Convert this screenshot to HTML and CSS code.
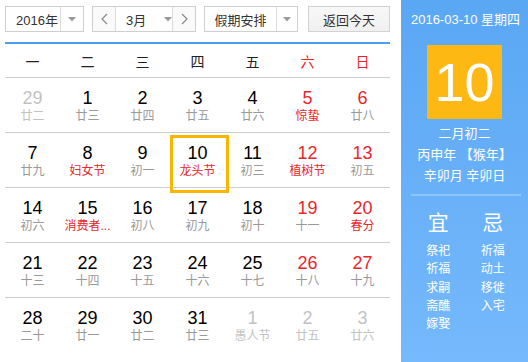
FILE: index.html
```html
<!DOCTYPE html>
<html lang="zh-CN">
<head>
<meta charset="utf-8">
<title>万年历</title>
<link rel="stylesheet" href="styles.css">
</head>
<body>
<div class="app">
  <div class="main">
    <div class="toolbar">
      <div class="sel year">
        <span class="val">2016年</span>
        <span class="drop"><svg width="8" height="5" viewBox="0 0 8 5"><path d="M0 0h8L4 4.5z" fill="#9a9a9a"/></svg></span>
      </div>
      <div class="sel month">
        <span class="nav"><svg width="7" height="12" viewBox="0 0 7 12"><path d="M6 1L1 6l5 5" fill="none" stroke="#888" stroke-width="1.2"/></svg></span>
        <span class="mid"><span class="mval">3月</span><svg width="8" height="5" viewBox="0 0 8 5"><path d="M0 0h8L4 4.5z" fill="#9a9a9a"/></svg></span>
        <span class="nav"><svg width="7" height="12" viewBox="0 0 7 12"><path d="M1 1l5 5-5 5" fill="none" stroke="#888" stroke-width="1.2"/></svg></span>
      </div>
      <div class="sel holiday">
        <span class="val center">假期安排</span>
        <span class="drop"><svg width="8" height="5" viewBox="0 0 8 5"><path d="M0 0h8L4 4.5z" fill="#9a9a9a"/></svg></span>
      </div>
      <button class="today">返回今天</button>
    </div>
    <div class="cal">
      <div class="week">
        <span>一</span><span>二</span><span>三</span><span>四</span><span>五</span><span class="red">六</span><span class="red">日</span>
      </div>
      <div class="row">
        <div class="cell other"><b>29</b><i>廿二</i></div>
        <div class="cell"><b>1</b><i>廿三</i></div>
        <div class="cell"><b>2</b><i>廿四</i></div>
        <div class="cell"><b>3</b><i>廿五</i></div>
        <div class="cell"><b>4</b><i>廿六</i></div>
        <div class="cell wk"><b>5</b><i class="fest">惊蛰</i></div>
        <div class="cell wk"><b>6</b><i>廿八</i></div>
      </div>
      <div class="row">
        <div class="cell"><b>7</b><i>廿九</i></div>
        <div class="cell"><b>8</b><i class="fest">妇女节</i></div>
        <div class="cell"><b>9</b><i>初一</i></div>
        <div class="cell today-cell"><b>10</b><i class="fest">龙头节</i></div>
        <div class="cell"><b>11</b><i>初三</i></div>
        <div class="cell wk"><b>12</b><i class="fest">植树节</i></div>
        <div class="cell wk"><b>13</b><i>初五</i></div>
      </div>
      <div class="row">
        <div class="cell"><b>14</b><i>初六</i></div>
        <div class="cell"><b>15</b><i class="fest">消费者...</i></div>
        <div class="cell"><b>16</b><i>初八</i></div>
        <div class="cell"><b>17</b><i>初九</i></div>
        <div class="cell"><b>18</b><i>初十</i></div>
        <div class="cell wk"><b>19</b><i>十一</i></div>
        <div class="cell wk"><b>20</b><i class="fest">春分</i></div>
      </div>
      <div class="row">
        <div class="cell"><b>21</b><i>十三</i></div>
        <div class="cell"><b>22</b><i>十四</i></div>
        <div class="cell"><b>23</b><i>十五</i></div>
        <div class="cell"><b>24</b><i>十六</i></div>
        <div class="cell"><b>25</b><i>十七</i></div>
        <div class="cell wk"><b>26</b><i>十八</i></div>
        <div class="cell wk"><b>27</b><i>十九</i></div>
      </div>
      <div class="row last">
        <div class="cell"><b>28</b><i>二十</i></div>
        <div class="cell"><b>29</b><i>廿一</i></div>
        <div class="cell"><b>30</b><i>廿二</i></div>
        <div class="cell"><b>31</b><i>廿三</i></div>
        <div class="cell other"><b>1</b><i>愚人节</i></div>
        <div class="cell other"><b>2</b><i>廿五</i></div>
        <div class="cell other"><b>3</b><i>廿六</i></div>
      </div>
    </div>
  </div>
  <aside class="side">
    <div class="date">2016-03-10 星期四</div>
    <div class="bigday">10</div>
    <div class="lunar">
      <div>二月初二</div>
      <div>丙申年 【猴年】</div>
      <div>辛卯月 辛卯日</div>
    </div>
    <div class="sep"></div>
    <div class="yiji">
      <div class="col">
        <div class="head">宜</div>
        <div>祭祀</div><div>祈福</div><div>求嗣</div><div>斋醮</div><div>嫁娶</div>
      </div>
      <div class="col">
        <div class="head">忌</div>
        <div>祈福</div><div>动土</div><div>移徙</div><div>入宅</div>
      </div>
    </div>
  </aside>
</div>
</body>
</html>
```

FILE: styles.css
```css
* { box-sizing: border-box; }
html, body { margin: 0; padding: 0; background: #fff; }
body {
  font-family: "Liberation Sans", "Noto Sans CJK SC", sans-serif;
  color: #333;
  width: 528px;
  height: 362px;
  overflow: hidden;
}
.app {
  display: flex;
  height: 362px;
}
.main {
  width: 401px;
  padding-left: 5px;
  padding-right: 11px;
}
.toolbar {
  height: 42px;
  padding-top: 6px;
  display: flex;
  align-items: flex-start;
}
.sel {
  height: 26px;
  border: 1px solid #cfcfcf;
  background: #fff;
  display: flex;
  font-size: 13px;
  color: #333;
}
.sel .val {
  display: flex;
  align-items: center;
  padding-left: 10px;
}
.sel .val.center {
  justify-content: center;
  padding-left: 0;
}
.sel .drop {
  display: flex;
  align-items: center;
  justify-content: center;
  border-left: 1px solid #dcdcdc;
}
.year { width: 79px; margin-right: 8px; }
.year .val { width: 54px; }
.year .drop { width: 23px; }
.month { width: 104px; margin-right: 8px; }
.month .nav {
  width: 22px;
  display: flex;
  align-items: center;
  justify-content: center;
  background: #fafafa;
}
.month .mid {
  width: 58px;
  border-left: 1px solid #dcdcdc;
  border-right: 1px solid #dcdcdc;
  display: flex;
  align-items: center;
  padding-left: 10px;
}
.month .mval { width: 38px; }
.holiday { width: 94px; margin-right: 10px; }
.holiday .val { width: 71px; }
.holiday .drop { width: 21px; }
.today {
  width: 82px;
  height: 26px;
  border: 1px solid #d2d2d2;
  background: linear-gradient(#f8f8f8, #f0f0f0);
  font-family: inherit;
  font-size: 13px;
  color: #333;
  padding: 0;
}
.cal {
  border-top: 2px solid #4e9ef0;
}
.week {
  display: grid;
  grid-template-columns: repeat(7, 55px);
  height: 34px;
  border-bottom: 1px solid #cccccc;
  align-items: center;
  font-size: 14px;
  color: #222;
  text-align: center;
}
.red { color: #e8262b; }
.row {
  display: grid;
  grid-template-columns: repeat(7, 55px);
  height: 55px;
  border-bottom: 1px solid #cccccc;
}
.row.last { border-bottom: none; }
.cell {
  position: relative;
  text-align: center;
  padding-top: 10px;
}
.cell b {
  display: block;
  font-weight: normal;
  font-size: 18px;
  line-height: 20px;
  color: #000;
}
.cell i {
  display: block;
  font-style: normal;
  font-size: 12px;
  line-height: 17px;
  color: #999;
  white-space: nowrap;
}
.cell.wk b { color: #e8262b; }
.cell i.fest { color: #e8262b; }
.cell.other b { color: #c2c2c2; }
.cell.other i { color: #c2c2c2; }
.today-cell::after {
  content: "";
  position: absolute;
  left: 0;
  top: 2px;
  width: 53px;
  height: 52px;
  border: 3px solid #fbb400;
}
.side {
  width: 127px;
  height: 362px;
  background: linear-gradient(#5aa7f4, #76b9fc);
  color: #fff;
  text-align: center;
  padding-top: 12px;
}
.date {
  font-size: 13px;
  line-height: 16px;
  padding-left: 2px;
}
.bigday {
  width: 75px;
  height: 74px;
  margin: 17px auto 0;
  background: #fdb813;
  font-size: 54px;
  line-height: 74px;
  font-weight: normal;
}
.lunar {
  margin-top: 4px;
  font-size: 13px;
  line-height: 21px;
}
.sep {
  height: 2px;
  margin: 8px 7px 0 10px;
  background: #8dc4f9;
}
.yiji {
  display: grid;
  grid-template-columns: 1fr 1fr;
  padding: 0 8px 0 10px;
  margin-top: 15px;
  font-size: 12px;
  line-height: 18.3px;
}
.yiji .head {
  font-size: 21px;
  line-height: 24px;
  margin-bottom: 7px;
}
```
